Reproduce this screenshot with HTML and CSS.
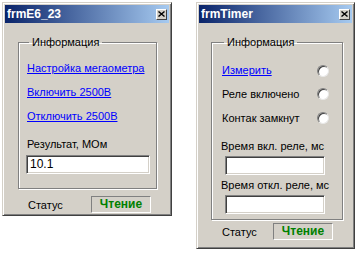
FILE: index.html
```html
<!DOCTYPE html>
<html lang="ru">
<head>
    <meta charset="UTF-8">
    <title>frmE6_23 / frmTimer</title>
    <link rel="stylesheet" href="styles.css">
</head>
<body>
    <div class="desktop">
        <div class="window win-e6">
            <div class="titlebar">
                <span class="title">frmE6_23</span>
                <span class="close">
                    <svg width="7" height="6" viewBox="0 0 7 6"><path d="M0.5 0.5 L6.5 5.5 M6.5 0.5 L0.5 5.5" stroke="#000" stroke-width="1.4"/></svg>
                </span>
            </div>
            <fieldset class="group group-e6">
                <legend>Информация</legend>
                <a class="link" href="#">Настройка мегаометра</a>
                <a class="link" href="#">Включить 2500В</a>
                <a class="link" href="#">Отключить 2500В</a>
                <div class="label">Результат, МОм</div>
                <div class="textbox">10.1</div>
            </fieldset>
            <div class="status-row">
                <span class="status-label">Статус</span>
                <span class="status-box">Чтение</span>
            </div>
        </div>

        <div class="window win-timer">
            <div class="titlebar">
                <span class="title">frmTimer</span>
                <span class="close">
                    <svg width="7" height="6" viewBox="0 0 7 6"><path d="M0.5 0.5 L6.5 5.5 M6.5 0.5 L0.5 5.5" stroke="#000" stroke-width="1.4"/></svg>
                </span>
            </div>
            <fieldset class="group group-timer">
                <legend>Информация</legend>
                <div class="radio-row">
                    <a class="link" href="#">Измерить</a>
                    <span class="radio"></span>
                </div>
                <div class="radio-row">
                    <span>Реле включено</span>
                    <span class="radio"></span>
                </div>
                <div class="radio-row">
                    <span>Контак замкнут</span>
                    <span class="radio"></span>
                </div>
                <div class="label">Время вкл. реле, мс</div>
                <div class="textbox"></div>
                <div class="label">Время откл. реле, мс</div>
                <div class="textbox"></div>
            </fieldset>
            <div class="status-row">
                <span class="status-label">Статус</span>
                <span class="status-box">Чтение</span>
            </div>
        </div>
    </div>
</body>
</html>
```

FILE: styles.css
```css
body {
    margin: 0;
    background: #fff;
    font-family: "Liberation Sans", Arial, sans-serif;
    font-size: 11px;
    color: #000;
}
.desktop {
    display: flex;
    align-items: flex-start;
    gap: 24px;
    padding: 2px;
}

/* window frame */
.window {
    background: #d4d0c8;
    border: 1px solid;
    border-color: #d4d0c8 #404040 #404040 #d4d0c8;
    box-shadow: inset 1px 1px #fff, inset -1px -1px #808080;
    padding: 2px;
    box-sizing: border-box;
}
.win-e6 {
    width: 170px;
    height: 214px;
}
.win-timer {
    width: 159px;
    height: 247px;
}
.titlebar {
    height: 18px;
    background: linear-gradient(to right, #0a246a, #a6caf0);
    display: flex;
    align-items: center;
    justify-content: space-between;
    padding: 0 2px 0 2px;
}
.title {
    color: #fff;
    font-weight: bold;
    font-size: 12px;
}
.close {
    width: 11px;
    height: 11px;
    box-sizing: border-box;
    background: #d4d0c8;
    border: 1px solid;
    border-color: #fff #404040 #404040 #fff;
    display: flex;
    align-items: center;
    justify-content: center;
}

/* group box */
.group {
    margin: 13px 0 0;
    border: 1px solid #808080;
    box-shadow: 1px 1px #fff, inset 1px 1px #fff;
    box-sizing: border-box;
    display: flex;
    flex-direction: column;
    align-items: flex-start;
}
.group > * {
    flex-shrink: 0;
    white-space: nowrap;
}
.group legend {
    padding: 0 3px;
    margin-left: 2px;
    line-height: 13px;
}
.group-e6 {
    width: 139px;
    height: 153px;
    margin-left: 13px;
    padding: 0 0 0 8px;
}
.group-timer {
    width: 129px;
    height: 184px;
    margin-left: 12px;
    padding: 0 13px 0 10px;
}
.link {
    color: #0000ff;
    text-decoration: underline;
    line-height: 13px;
}
.label {
    line-height: 13px;
}
.textbox {
    height: 19px;
    box-sizing: border-box;
    background: #fff;
    border: 1px solid;
    border-color: #808080 #fff #fff #808080;
    box-shadow: inset 1px 1px #404040, inset -1px -1px #d4d0c8;
    padding: 1px 3px;
    line-height: 15px;
}

/* frmE6_23 spacing */
.group-e6 .link {
    margin-top: 11px;
}
.group-e6 .link:first-of-type {
    margin-top: 13px;
}
.group-e6 .label {
    margin-top: 15px;
}
.group-e6 .textbox {
    width: 124px;
    margin: 4px 0 0 -1px;
    font-size: 12px;
}

/* frmTimer spacing */
.radio-row {
    display: flex;
    align-items: center;
    justify-content: space-between;
    align-self: stretch;
    height: 13px;
    margin-top: 10px;
}
.radio-row:first-of-type {
    margin-top: 15px;
}
.radio-row:nth-of-type(3) {
    margin-top: 11px;
}
.radio {
    width: 12px;
    height: 12px;
    box-sizing: border-box;
    border-radius: 50%;
    background: #fff;
    border: 1px solid;
    border-color: #808080 #e8e8e8 #e8e8e8 #808080;
    box-shadow: inset 1px 1px #404040;
}
.group-timer .label {
    margin: 16px 0 0 -1px;
}
.group-timer .textbox {
    width: 100px;
    margin: 3px 0 0 3px;
}
.group-timer .textbox + .label {
    margin-top: 4px;
}

/* status line */
.status-row {
    display: flex;
    align-items: center;
}
.win-e6 .status-row {
    margin: 7px 0 0 23px;
}
.win-timer .status-row {
    margin: 3px 0 0 23px;
}
.status-label {
    width: 63px;
}
.win-timer .status-label {
    width: 51px;
}
.status-box {
    width: 60px;
    height: 17px;
    box-sizing: border-box;
    border: 1px solid;
    border-color: #808080 #fff #fff #808080;
    color: #008000;
    font-weight: bold;
    font-size: 12px;
    text-align: center;
    line-height: 15px;
}
```
